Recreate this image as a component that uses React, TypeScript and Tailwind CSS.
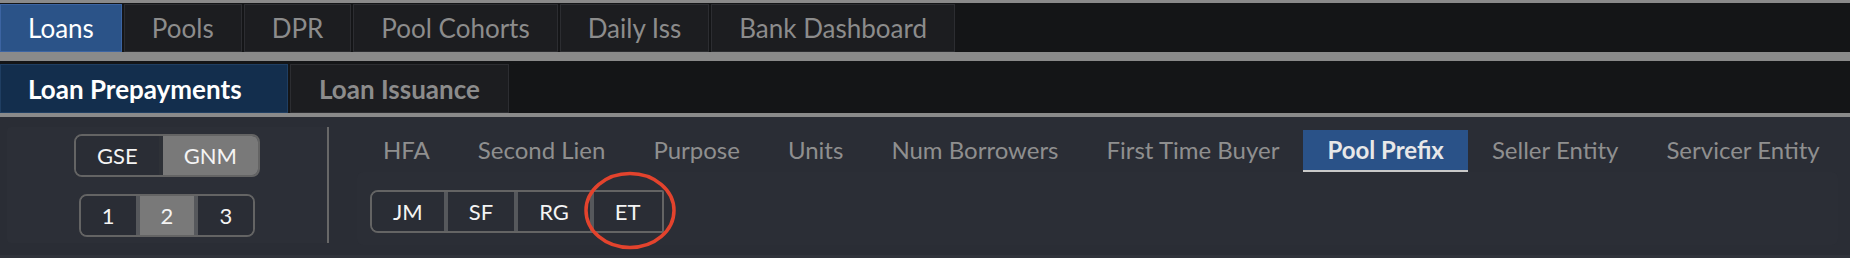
import React from "react";

const topTabs = ["Loans", "Pools", "DPR", "Pool Cohorts", "Daily Iss", "Bank Dashboard"];
const subTabs = ["Loan Prepayments", "Loan Issuance"];
const filterTabs = [
  "HFA",
  "Second Lien",
  "Purpose",
  "Units",
  "Num Borrowers",
  "First Time Buyer",
  "Pool Prefix",
  "Seller Entity",
  "Servicer Entity",
];

function Seg({
  items,
  active,
  sepClass,
  roundClass,
}: {
  items: string[];
  active: number;
  sepClass: string;
  roundClass: string;
}) {
  return (
    <div className={`flex h-[43px] border-2 border-[#646464] overflow-hidden ${roundClass}`}>
      {items.map((it, i) => (
        <div key={it} className="flex">
          {i > 0 && <div className={`w-[4px] h-full ${sepClass}`} />}
          <div
            className={`h-full flex items-center px-[21px] text-[22px] text-[#f4f4f4] leading-none whitespace-nowrap ${
              i === active ? "bg-[#797979]" : "bg-[#2a2d35]"
            }`}
          >
            {it}
          </div>
        </div>
      ))}
    </div>
  );
}

export default function App() {
  return (
    <div className="relative w-[1850px] h-[258px] bg-[#2a2d35] flex flex-col font-[Lato,'Noto_Sans',sans-serif] overflow-hidden">
      {/* Top tab row */}
      <div className="h-[61px] bg-[#141517] border-t-[3px] border-b-[9px] border-[#8a8a8a] pt-px flex gap-[2px]">
        {topTabs.map((t, i) => (
          <div
            key={t}
            className={`h-[48px] shrink-0 whitespace-nowrap flex items-center px-[27px] text-[26px] leading-none border ${
              i === 0
                ? "bg-[#2b5388] border-[#3c64a2] text-white"
                : "bg-[#1c1d20] border-[#2c2d31] text-[#8c8c8c]"
            }`}
          >
            {t}
          </div>
        ))}
      </div>
      {/* Second tab row */}
      <div className="h-[56px] bg-[#141517] pt-[3px] border-b-4 border-[#8a8a8a] flex gap-[2px]">
        {subTabs.map((t, i) => (
          <div
            key={t}
            className={`h-[49px] shrink-0 whitespace-nowrap flex items-center text-[26px] font-bold leading-none border ${
              i === 0
                ? "w-[288px] pl-[27px] bg-[#132e4d] border-[#1f3e62] text-white"
                : "px-[28px] bg-[#1c1d20] border-[#2c2d31] text-[#8c8c8c]"
            }`}
          >
            {t}
          </div>
        ))}
      </div>
      {/* Panel */}
      <div className="flex-1 flex items-start px-[7px]">
        <div className="mt-[10px] shrink-0 w-[322px] h-[116px] bg-[#2c2f37] border-r-2 border-[#686868] rounded-l-[4px] flex flex-col items-center pt-[7px] gap-[17px]">
          <Seg items={["GSE", "GNM"]} active={1} sepClass="bg-[#2e3137]" roundClass="rounded-[8px]" />
          <Seg items={["1", "2", "3"]} active={1} sepClass="bg-[#56585c]" roundClass="rounded-[8px]" />
        </div>
        <div className="flex-1 min-w-0 flex flex-col pt-[13px] pl-[28px]">
          <div className="flex ml-[2px]">
            {filterTabs.map((t) => {
              const act = t === "Pool Prefix";
              return (
                <div
                  key={t}
                  className={`h-[42px] shrink-0 whitespace-nowrap flex items-center px-[24px] text-[24px] leading-none border-b-2 pb-px ${
                    act
                      ? "bg-[#2a5288] border-[#c9c9c9] text-[#e8e8e8] font-bold"
                      : "border-transparent text-[#8f8f8f]"
                  }`}
                >
                  {t}
                </div>
              );
            })}
          </div>
          <div className="mr-[5px] h-[73px] bg-[#2b2e36] rounded-[6px] pt-[18px] pl-[13px] flex">
            <Seg
              items={["JM", "SF", "RG", "ET"]}
              active={-1}
              sepClass="bg-[#56585c]"
              roundClass="rounded-l-[8px] rounded-r-[2px]"
            />
          </div>
        </div>
      </div>
      <div className="h-[3px] bg-[#30333b]" />
      {/* Red annotation circle */}
      <svg
        className="absolute left-[583px] top-[171px] w-[94px] h-[79px] pointer-events-none"
        viewBox="0 0 94 79"
      >
        <ellipse cx="47" cy="39.5" rx="44" ry="37" fill="none" stroke="#e3432d" strokeWidth="3.5" />
      </svg>
    </div>
  );
}
